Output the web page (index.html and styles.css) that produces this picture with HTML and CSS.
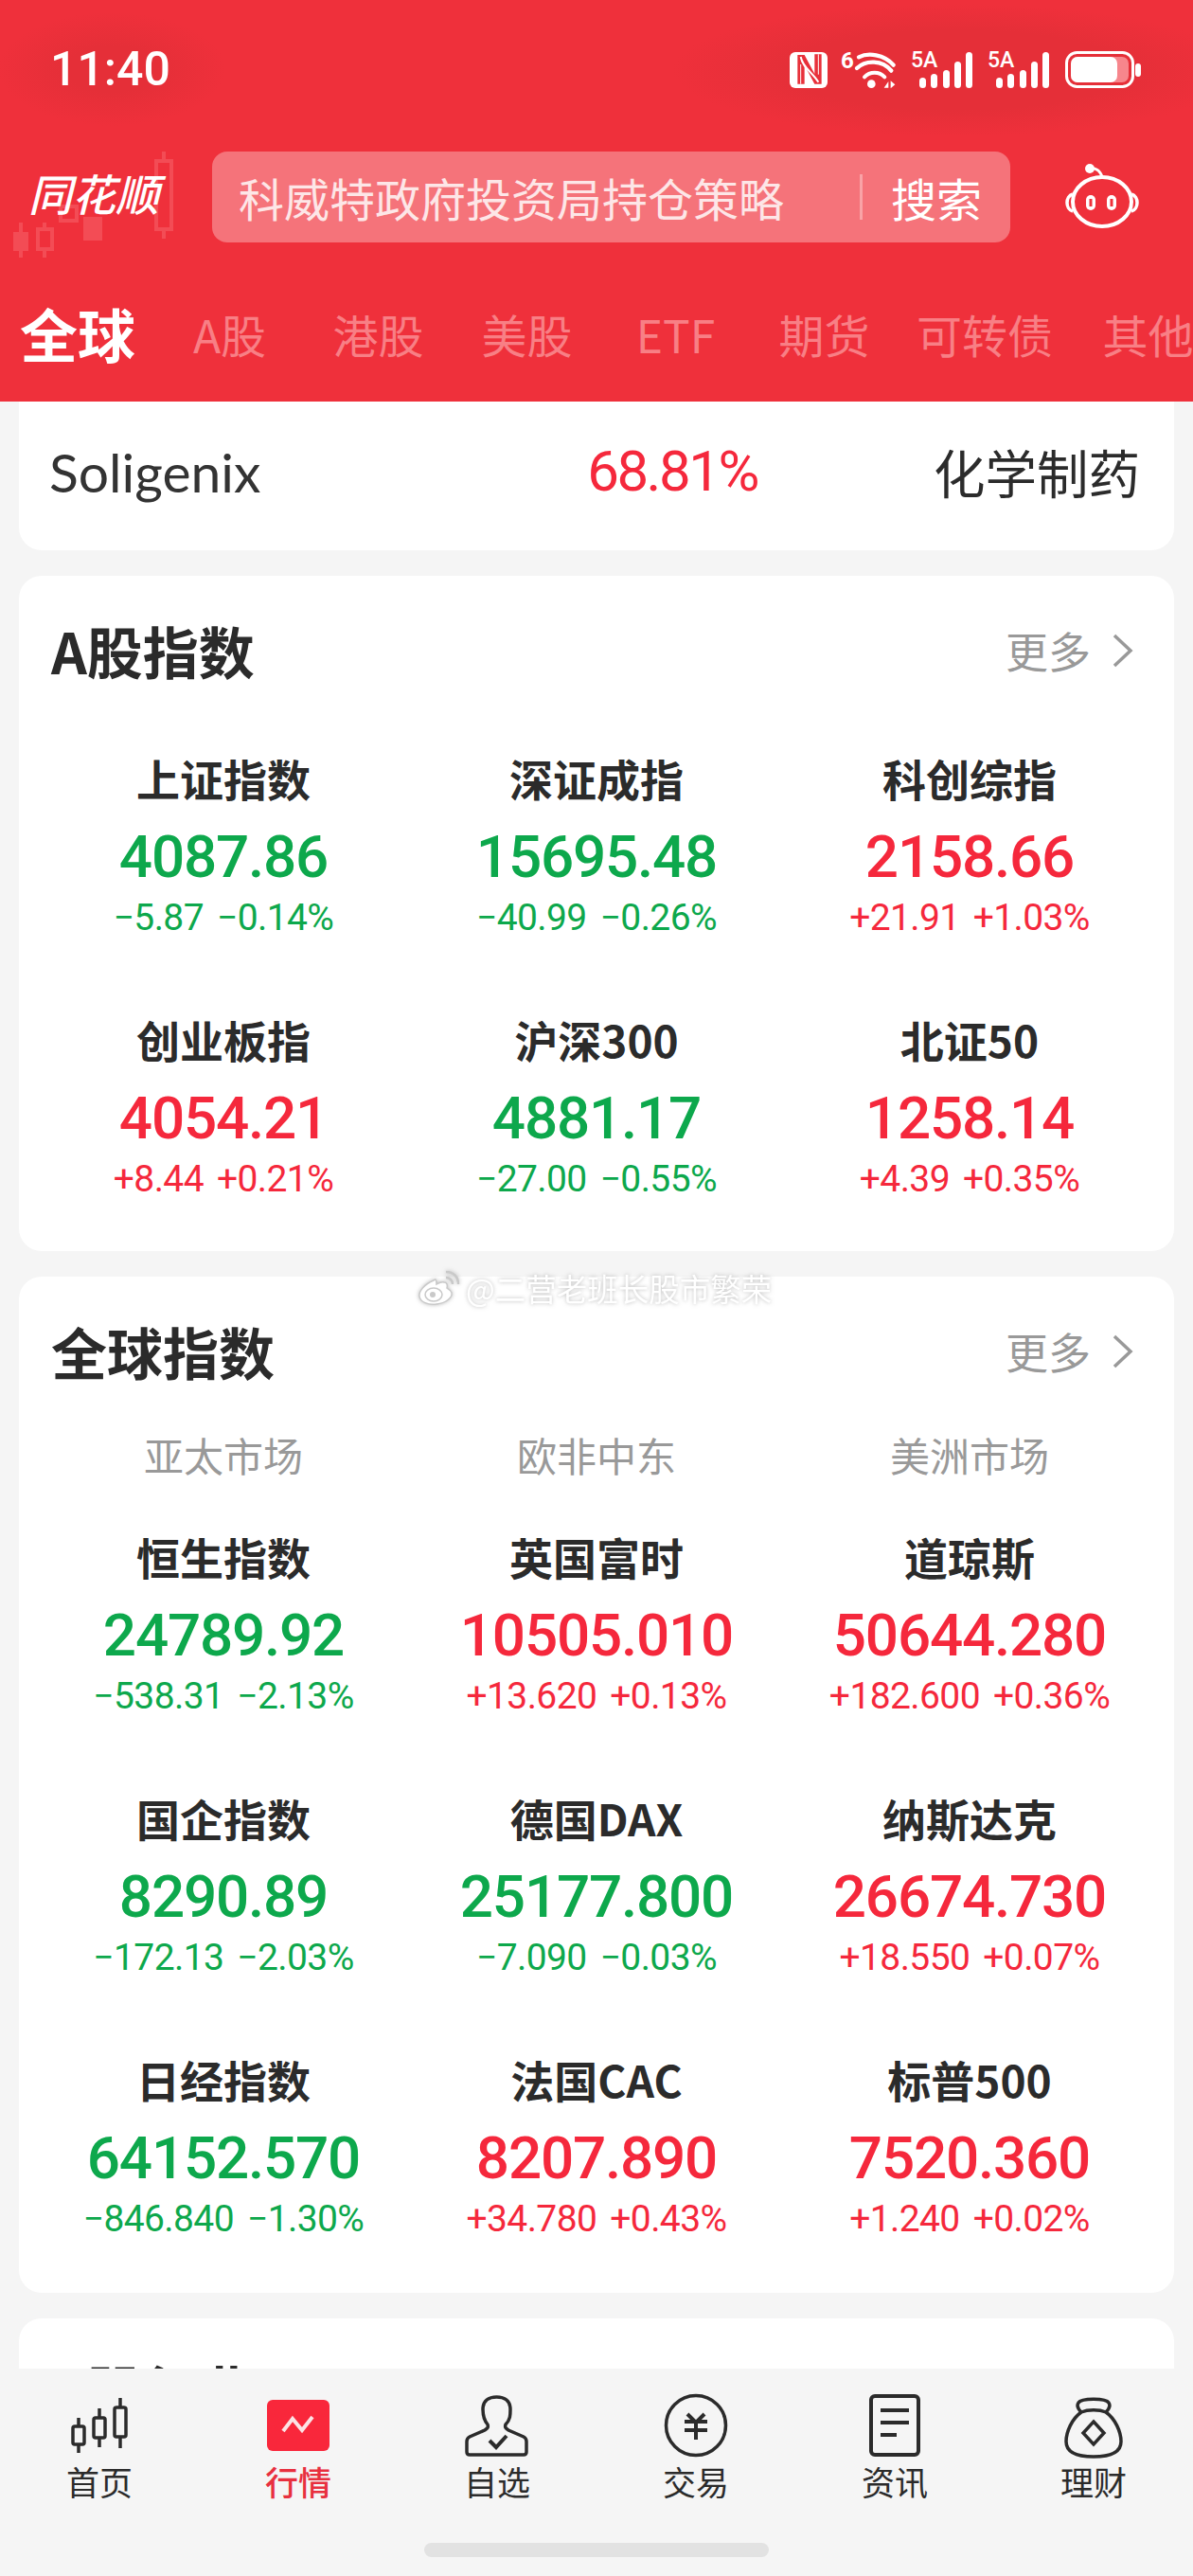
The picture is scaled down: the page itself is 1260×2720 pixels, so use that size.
FILE: index.html
```html
<!DOCTYPE html>
<html lang="zh">
<head>
<meta charset="utf-8">
<title>行情</title>
<link rel="stylesheet" href="styles.css">
</head>
<body>
<div class="app">
  <header class="header">
    <div class="status">
      <span class="time">11:40</span>
      <svg class="status-icons" width="380" height="44" viewBox="0 0 380 44" fill="none">
        <rect x="9" y="4" width="40" height="38" rx="6" fill="#fff"/>
        <text x="63" y="21" class="si-six">6</text>
        <g transform="translate(2,-3) scale(.3333)">
          <path d="M46 30L68 30L100 90L100 28L122 28L122 122L100 122L68 62L68 122L46 122Z" fill="#E8303A"/>
          <path d="M56 36C62 70 92 84 112 116" stroke="#fff" stroke-width="6"/>
          <path d="M56 122V60M112 28V92" stroke="#fff" stroke-width="3"/>
          <path d="M240 37C270 22 320 28 350 62" stroke="#fff" stroke-width="13" stroke-linecap="round"/>
          <path d="M234 72C262 45 315 45 343 80" stroke="#fff" stroke-width="13" stroke-linecap="round"/>
          <path d="M258 100C275 82 305 82 322 100" stroke="#fff" stroke-width="12" stroke-linecap="round"/>
          <circle cx="280" cy="122" r="13" fill="#fff"/>
          <path d="M320 134L334 114V134ZM341 112L355 124L341 136Z" fill="#fff"/>
        </g>
        <g>
          <text x="137" y="20" class="si-text">5A</text>
          <rect x="146" y="31" width="7" height="11" rx="3.500" fill="#fff"/>
          <rect x="158" y="27" width="7" height="15" rx="3.500" fill="#fff"/>
          <rect x="171" y="23" width="7" height="19" rx="3.500" fill="#fff"/>
          <rect x="183" y="14" width="7" height="28" rx="3.500" fill="#fff"/>
          <rect x="195" y="4" width="7" height="38" rx="3.500" fill="#fff"/>
        </g>
        <g transform="translate(81,0)">
          <text x="137" y="20" class="si-text">5A</text>
          <rect x="146" y="31" width="7" height="11" rx="3.500" fill="#fff"/>
          <rect x="158" y="27" width="7" height="15" rx="3.500" fill="#fff"/>
          <rect x="171" y="23" width="7" height="19" rx="3.500" fill="#fff"/>
          <rect x="183" y="14" width="7" height="28" rx="3.500" fill="#fff"/>
          <rect x="195" y="4" width="7" height="38" rx="3.500" fill="#fff"/>
        </g>
        <rect x="301.500" y="4.500" width="70" height="36" rx="11" stroke="#fff" stroke-width="3"/>
        <rect x="306" y="9" width="61" height="27" rx="7" fill="#F7868C"/>
        <rect x="306" y="9" width="49" height="27" rx="7" fill="#fff"/>
        <rect x="374" y="16" width="6" height="14" rx="3" fill="#fff"/>
      </svg>
    </div>
    <div class="search-row">
      <div class="logo">
        <svg class="logo-candles" width="224" height="112" viewBox="0 0 224 112">
          <g fill="#F34C55" stroke="#F34C55" stroke-width="4">
            <path d="M22 75v48" fill="none"/>
            <rect x="14" y="85" width="16" height="20" stroke="none"/>
            <path d="M47 75v50" fill="none"/>
            <rect x="40" y="82" width="15" height="21" fill="#EF303B"/>
            <rect x="64" y="58" width="17" height="15" fill="#EF303B"/>
            <rect x="88" y="69" width="20" height="25" stroke="none"/>
            <path d="M173 0v92" fill="none"/>
            <rect x="165" y="10" width="16" height="72" fill="#EF303B"/>
          </g>
        </svg>
        <span class="logo-text">同花顺</span>
      </div>
      <div class="search">
        <span class="search-text">科威特政府投资局持仓策略</span>
        <span class="search-btn">搜索</span>
      </div>
      <div class="robot">
        <svg width="80" height="70" viewBox="0 0 80 70" fill="none">
          <path d="M26 5c6-1 11 2 13 9" stroke="#fff" stroke-width="3"/>
          <circle cx="26" cy="5" r="5" fill="#fff"/>
          <ellipse cx="39" cy="40" rx="31" ry="26" stroke="#fff" stroke-width="4"/>
          <path d="M8 32c-4 1-6 5-6 9s2 8 6 9M70 32c4 1 6 5 6 9s-2 8-6 9" stroke="#fff" stroke-width="3.500"/>
          <rect x="22" y="33" width="10" height="16" rx="5" fill="#fff"/>
          <rect x="44" y="33" width="10" height="16" rx="5" fill="#fff"/>
          <rect x="25.500" y="37" width="3" height="8" fill="#EF303B"/>
          <rect x="47.500" y="37" width="3" height="8" fill="#EF303B"/>
        </svg>
      </div>
    </div>
    <nav class="tabs">
      <span class="tab tab-active">全球</span>
      <span class="tab">A股</span>
      <span class="tab">港股</span>
      <span class="tab">美股</span>
      <span class="tab">ETF</span>
      <span class="tab">期货</span>
      <span class="tab">可转债</span>
      <span class="tab">其他</span>
    </nav>
  </header>

  <main class="main">
    <section class="card card-top">
      <span class="top-name">Soligenix</span>
      <span class="top-pct up">68.81%</span>
      <span class="top-sector">化学制药</span>
    </section>

    <section class="card">
      <div class="card-head">
        <h2 class="card-title">A股指数</h2>
        <span class="more">更多<svg class="chev" width="26" height="40" viewBox="0 0 26 40" fill="none"><path d="M4 4l17 16L4 36" stroke="#999" stroke-width="3.500"/></svg></span>
      </div>
      <div class="grid grid-a">
        <div class="cell"><div class="name">上证指数</div><div class="num down">4087.86</div><div class="chg down"><span>−5.87</span><span>−0.14%</span></div></div>
        <div class="cell"><div class="name">深证成指</div><div class="num down">15695.48</div><div class="chg down"><span>−40.99</span><span>−0.26%</span></div></div>
        <div class="cell"><div class="name">科创综指</div><div class="num up">2158.66</div><div class="chg up"><span>+21.91</span><span>+1.03%</span></div></div>
        <div class="cell"><div class="name">创业板指</div><div class="num up">4054.21</div><div class="chg up"><span>+8.44</span><span>+0.21%</span></div></div>
        <div class="cell"><div class="name">沪深300</div><div class="num down">4881.17</div><div class="chg down"><span>−27.00</span><span>−0.55%</span></div></div>
        <div class="cell"><div class="name">北证50</div><div class="num up">1258.14</div><div class="chg up"><span>+4.39</span><span>+0.35%</span></div></div>
      </div>
    </section>

    <section class="card">
      <div class="card-head">
        <h2 class="card-title">全球指数</h2>
        <span class="more">更多<svg class="chev" width="26" height="40" viewBox="0 0 26 40" fill="none"><path d="M4 4l17 16L4 36" stroke="#999" stroke-width="3.500"/></svg></span>
      </div>
      <div class="regions">
        <span>亚太市场</span><span>欧非中东</span><span>美洲市场</span>
      </div>
      <div class="grid grid-b">
        <div class="cell"><div class="name">恒生指数</div><div class="num down">24789.92</div><div class="chg down"><span>−538.31</span><span>−2.13%</span></div></div>
        <div class="cell"><div class="name">英国富时</div><div class="num up">10505.010</div><div class="chg up"><span>+13.620</span><span>+0.13%</span></div></div>
        <div class="cell"><div class="name">道琼斯</div><div class="num up">50644.280</div><div class="chg up"><span>+182.600</span><span>+0.36%</span></div></div>
        <div class="cell"><div class="name">国企指数</div><div class="num down">8290.89</div><div class="chg down"><span>−172.13</span><span>−2.03%</span></div></div>
        <div class="cell"><div class="name">德国DAX</div><div class="num down">25177.800</div><div class="chg down"><span>−7.090</span><span>−0.03%</span></div></div>
        <div class="cell"><div class="name">纳斯达克</div><div class="num up">26674.730</div><div class="chg up"><span>+18.550</span><span>+0.07%</span></div></div>
        <div class="cell"><div class="name">日经指数</div><div class="num down">64152.570</div><div class="chg down"><span>−846.840</span><span>−1.30%</span></div></div>
        <div class="cell"><div class="name">法国CAC</div><div class="num up">8207.890</div><div class="chg up"><span>+34.780</span><span>+0.43%</span></div></div>
        <div class="cell"><div class="name">标普500</div><div class="num up">7520.360</div><div class="chg up"><span>+1.240</span><span>+0.02%</span></div></div>
      </div>
    </section>

    <section class="card">
      <div class="card-head card-head-last">
        <h2 class="card-title">A股行业</h2>
      </div>
    </section>
  </main>

  <div class="watermark">
    <svg width="46" height="38" viewBox="0 0 46 38" fill="none">
      <path d="M17 11C7 15 1 23 2 28c1 6 9 9 18 8 10-1 17-7 16-12-1-3-4-4-5-5 1-3 0-6-3-6-3-1-6 1-8 2 0-2 0-4-1-5-1 0-1 0-2 1z" fill="#fff" stroke="#c9c9c9" stroke-width="1.500"/>
      <ellipse cx="17" cy="26" rx="9" ry="7" stroke="#c9c9c9" stroke-width="1.500"/>
      <circle cx="16" cy="26" r="3" fill="#c9c9c9"/>
      <path d="M30 2c8 0 13 5 13 13M30 8c4 0 7 3 7 7" stroke="#c9c9c9" stroke-width="2.500"/>
    </svg>
    <span class="wm-text">@二营老班长股市繁荣</span>
  </div>

  <footer class="bottom">
    <nav class="bottom-nav">
      <div class="nav-item">
        <svg class="nav-icon" width="100" height="72" viewBox="0 0 100 72" fill="none" stroke="#2b2b2b" stroke-width="3.500">
          <path d="M28 27v9M28 55v9M50 17v10M50 48v10M72 6v10M72 47v12"/>
          <rect x="22" y="36" width="12" height="19" rx="2"/>
          <rect x="44" y="27" width="12" height="21" rx="2"/>
          <rect x="66" y="16" width="12" height="31" rx="2"/>
        </svg>
        <span class="nav-label">首页</span>
      </div>
      <div class="nav-item nav-active">
        <svg class="nav-icon" width="100" height="72" viewBox="0 0 100 72" fill="none">
          <rect x="17" y="8" width="66" height="54" rx="6" fill="#F9273B"/>
          <path d="M34 41l10-13 10 12 11-14" stroke="#FCE3E5" stroke-width="4"/>
        </svg>
        <span class="nav-label">行情</span>
      </div>
      <div class="nav-item">
        <svg class="nav-icon" width="100" height="72" viewBox="0 0 100 72" fill="none" stroke="#2b2b2b" stroke-width="3.500">
          <path d="M40 34c-5-6-5-12-5-16 0-9 6-13 14.500-13S64 9 64 18c0 6 0 11-5 16-1 3 0 4 3 6l16 7c2 1 3 3 3 5v11q0 3-3 3H21q-3 0-3-3V52c0-2 1-4 3-5l16-7c3-2 4-3 3-6z"/>
          <path d="M42 51l7 7 11-12" stroke-width="4"/>
        </svg>
        <span class="nav-label">自选</span>
      </div>
      <div class="nav-item">
        <svg class="nav-icon" width="100" height="72" viewBox="0 0 100 72" fill="none" stroke="#2b2b2b" stroke-width="3.500">
          <circle cx="50" cy="35" r="31.500"/>
          <path d="M41 23l9 9 9-9M38 31h24M38 40h24M50 32v18" stroke-width="4"/>
        </svg>
        <span class="nav-label">交易</span>
      </div>
      <div class="nav-item">
        <svg class="nav-icon" width="100" height="72" viewBox="0 0 100 72" fill="none" stroke="#2b2b2b" stroke-width="4">
          <rect x="25" y="4" width="50" height="62" rx="4"/>
          <path d="M35 19h30M35 32h30M35 45h17"/>
        </svg>
        <span class="nav-label">资讯</span>
      </div>
      <div class="nav-item">
        <svg class="nav-icon" width="100" height="72" viewBox="0 0 100 72" fill="none" stroke="#2b2b2b" stroke-width="3.500">
          <path d="M37 21C27 28 21 42 21 52c0 12 11 16 29 16s29-4 29-16c0-10-6-24-16-31-7-3-19-3-26 0z"/>
          <path d="M37 21c-3-3-5-7-3-10 3-5 29-5 32 0 2 3 0 7-3 10"/>
          <path d="M50 31l11 12-11 12-11-12z"/>
        </svg>
        <span class="nav-label">理财</span>
      </div>
    </nav>
    <div class="home-bar"></div>
  </footer>
</div>
</body>
</html>
```
FILE: styles.css
```css
* { box-sizing: border-box; }
html, body { margin: 0; padding: 0; }
body {
  width: 1260px;
  height: 2720px;
  background: #f5f5f5;
  font-family: "Noto Sans CJK SC", "Noto Sans", sans-serif;
  color: #2b2b2b;
}
.app {
  position: relative;
  width: 1260px;
  height: 2720px;
  display: flex;
  flex-direction: column;
  overflow: hidden;
}

/* header */
.header { background: #EF303B; height: 424px; flex: none; overflow: hidden; }
.status {
  height: 146px;
  display: flex;
  align-items: center;
  justify-content: space-between;
  padding: 0 55px 0 53px;
  background:
    radial-gradient(ellipse 120px 60px at 118px 73px, #E52F38 40%, rgba(229,47,56,0) 100%),
    radial-gradient(ellipse 300px 70px at 1010px 74px, #E52F38 60%, rgba(229,47,56,0) 100%);
}
.time {
  font-family: "Roboto", sans-serif;
  font-size: 50px;
  font-weight: 500;
  color: #fff;
  line-height: 1;
}
.status-icons { display: block; }
.si-text { font: 500 23px "Roboto", sans-serif; fill: #fff; }
.si-six { font: 700 24px "Roboto", sans-serif; fill: #fff; }

.search-row { margin-top: 14px; height: 96px; display: flex; align-items: center; }
.logo {
  position: relative;
  width: 224px;
  height: 96px;
  flex: none;
  display: flex;
  align-items: center;
  padding-left: 30px;
}
.logo-candles { position: absolute; left: 0; top: 0; }
.logo-text {
  position: relative;
  font-size: 46px;
  font-weight: 500;
  font-style: italic;
  color: #fff;
  line-height: 1;
  margin-top: -10px;
}
.search {
  width: 843px;
  height: 96px;
  flex: none;
  border-radius: 16px;
  background: #F5737A;
  display: flex;
  align-items: center;
  justify-content: space-between;
  padding: 0 30px 0 28px;
}
.search-text { font-size: 48px; color: #FDE6E7; line-height: 1; white-space: nowrap; }
.search-btn {
  font-size: 48px;
  color: #fff;
  line-height: 48px;
  border-left: 3px solid #F9A3A7;
  padding-left: 30px;
}
.robot { flex: 1; display: flex; padding-left: 58px; }
.robot svg { display: block; }

.tabs {
  margin-top: 24px;
  height: 144px;
  display: grid;
  grid-template-columns: 164px 157px 157px 157px 157px 157px 182px 163px;
  align-items: center;
  width: 1294px;
}
.tab { text-align: center; font-size: 48px; line-height: 64px; color: #F87F85; white-space: nowrap; }
.tab-active { font-size: 61px; font-weight: 700; color: #fff; }

/* main */
.main {
  flex: 1;
  min-height: 0;
  overflow: hidden;
  padding: 0 20px;
  display: flex;
  flex-direction: column;
  gap: 27px;
}
.card { background: #fff; border-radius: 24px; flex: none; padding: 0 19px 52px; }
.card-top {
  height: 157px;
  border-radius: 0 0 24px 24px;
  padding: 0 36px 10px 32px;
  display: grid;
  grid-template-columns: 558px 200px 394px;
  align-items: center;
}
.top-name { font-family: "Lato", sans-serif; font-size: 57px; line-height: 70px; color: #333; }
.top-pct { font-size: 60px; font-family: "Roboto", sans-serif; line-height: 70px; letter-spacing: -2.5px; text-align: center; white-space: nowrap; }
.top-sector { font-size: 54.500px; line-height: 70px; text-align: right; }

.card-head {
  padding: 39px 22px 3px 15px;
  height: 122px;
  display: flex;
  align-items: center;
  justify-content: space-between;
}
.card-head-last { padding-top: 31px; }
.card-title { margin: 0; font-size: 59px; line-height: 80px; font-weight: 700; color: #2b2b2b; white-space: nowrap; }
.more { display: flex; align-items: center; gap: 21px; font-size: 45px; color: #999; line-height: 60px; }
.chev { display: block; }

.grid { display: grid; grid-template-columns: repeat(3, 1fr); row-gap: 74px; }
.grid-a { margin-top: 61px; }
.grid-b { margin-top: 52px; margin-bottom: 2px; }
.regions { margin-top: 41px; display: grid; grid-template-columns: repeat(3, 1fr); text-align: center; font-size: 42px; line-height: 50px; color: #999; }

.cell { height: 202px; text-align: center; white-space: nowrap; }
.name { font-size: 46px; font-weight: 700; line-height: 60px; color: #2b2b2b; }
.num { margin-top: 18px; font-family: "Roboto", sans-serif; font-size: 62px; font-weight: 500; line-height: 72px; letter-spacing: -1.2px; }
.chg { margin-top: 4px; font-family: "Roboto", sans-serif; font-size: 39px; line-height: 48px; display: flex; justify-content: center; gap: 14px; letter-spacing: -0.6px; }
.up { color: #F5283C; }
.down { color: #0DA84C; }

/* watermark */
.watermark {
  position: absolute;
  left: 441px;
  top: 1341px;
  display: flex;
  align-items: center;
  gap: 5px;
  filter: drop-shadow(0 0 2px rgba(120,120,120,.5));
}
.wm-text { font-size: 32.500px; line-height: 38px; color: #fff; white-space: nowrap; }

/* bottom */
.bottom { height: 219px; flex: none; background: #f5f5f5; display: flex; flex-direction: column; }
.bottom-nav { display: grid; grid-template-columns: repeat(6, 210px); padding-top: 25px; }
.nav-item { display: flex; flex-direction: column; align-items: center; }
.nav-icon { display: block; }
.nav-label { margin-top: 2px; font-size: 35px; line-height: 40px; color: #2b2b2b; }
.nav-active .nav-label { color: #E8303F; font-weight: 500; }
.home-bar { margin: 45px auto 0; width: 364px; height: 15px; border-radius: 8px; background: #e2e2e2; }
```
